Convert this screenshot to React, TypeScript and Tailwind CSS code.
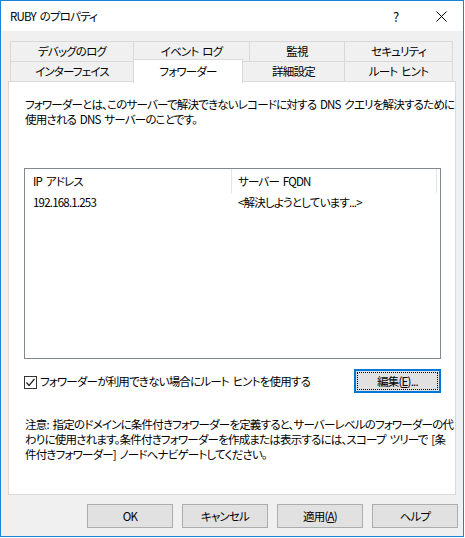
import type { ReactNode } from "react"

const font = { fontFamily: '"Noto Sans CJK JP", "Noto Sans", sans-serif' }

interface TabProps {
  label: string
  w: string
  first?: boolean
  active?: boolean
}

const Tab = ({ label, w, first, active }: TabProps) => {
  if (active) {
    return (
      <div className={`${w} -ml-px -mt-[2px] h-[24px] relative z-10 bg-white border border-b-0 border-[#d9d9d9] flex items-center justify-center`}>
        {label}
      </div>
    )
  }
  return (
    <div className={`${w} ${first ? "" : "-ml-px"} h-[21px] border border-[#d9d9d9] bg-[#f0f0f0] flex items-center justify-center`}>
      {label}
    </div>
  )
}

const Btn = ({ children }: { children: ReactNode }) => (
  <button className="w-[86px] h-[24px] border border-[#adadad] bg-[#e1e1e1] flex items-center justify-center">
    {children}
  </button>
)

export default function App() {
  return (
    <div className="w-[465px] h-[538px] bg-white text-[11.5px] tracking-[-0.8px] [word-spacing:2px] leading-[15px] text-black [font-feature-settings:'palt']" style={font}>
      <div className="w-[464px] h-[537px] border border-[#1883d7] bg-[#f0f0f0] flex flex-col">
        {/* title bar */}
        <div className="h-[30px] bg-white flex items-center pl-[9px]">
          <span className="flex-1">RUBY のプロパティ</span>
          <span className="w-[12px] text-center mr-[34px] text-[13px] tracking-normal">?</span>
          <svg width="11" height="11" viewBox="0 0 11 11" className="mr-[16px]">
            <path d="M0.5 0.5 L10.5 10.5 M10.5 0.5 L0.5 10.5" stroke="#000" strokeWidth="1" />
          </svg>
        </div>

        <div className="pt-[10px] px-[7px]">
          <div className="ml-[2px] flex h-[21px]">
            <Tab first w="w-[124px]" label="デバッグのログ" />
            <Tab w="w-[117px]" label="イベント ログ" />
            <Tab w="w-[96px]" label="監視" />
            <Tab w="w-[109px]" label="セキュリティ" />
          </div>
          <div className="ml-[2px] -mt-px flex items-start h-[21px]">
            <Tab first w="w-[124px]" label="インターフェイス" />
            <Tab active w="w-[110px]" label="フォワーダー" />
            <Tab w="w-[103px]" label="詳細設定" />
            <Tab w="w-[109px]" label="ルート ヒント" />
          </div>

          {/* panel */}
          <div className="-mt-px w-[448px] h-[414px] bg-white border border-[#d9d9d9] px-[15px] pt-[15px]">
            <div className="pl-[1px]">
              <div className="whitespace-nowrap">フォワーダーとは、このサーバーで解決できないレコードに対する DNS クエリを解決するために</div>
              <div className="whitespace-nowrap">使用される DNS サーバーのことです。</div>
            </div>

            <div className="mt-[41px] w-[417px] h-[191px] border border-[#828790] bg-white">
              <div className="flex h-[24px]">
                <div className="w-[207px] pl-[8px] flex items-center border-r border-[#e5e5e5]">IP アドレス</div>
                <div className="w-[205px] pl-[6px] flex items-center border-r border-[#e5e5e5]">サーバー FQDN</div>
              </div>
              <div className="flex h-[18px] items-center">
                <div className="w-[207px] pl-[8px]">192.168.1.253</div>
                <div className="pl-[6px]">&lt;解決しようとしています...&gt;</div>
              </div>
            </div>

            <div className="mt-[10px] w-[417px] h-[24px] flex items-center">
              <div className="w-[13px] h-[13px] mt-[2px] border border-[#333] bg-white flex items-center justify-center">
                <svg width="11" height="11" viewBox="0 0 11 11">
                  <path d="M1.5 5.5 L4 8.5 L9.5 2" fill="none" stroke="#222" strokeWidth="1.2" />
                </svg>
              </div>
              <span className="ml-[3px] flex-1 mt-[1px]">フォワーダーが利用できない場合にルート ヒントを使用する</span>
              <button className="w-[87px] h-[24px] border-2 border-[#0078d7] bg-[#e1e1e1] p-px">
                <span className="w-full h-full flex items-center justify-center border border-dotted border-black">
                  編集(<span className="underline">E</span>)...
                </span>
              </button>
            </div>

            <div className="mt-[24px] pl-[1px]">
              <div className="whitespace-nowrap">注意: 指定のドメインに条件付きフォワーダーを定義すると、サーバーレベルのフォワーダーの代</div>
              <div className="whitespace-nowrap">わりに使用されます。条件付きフォワーダーを作成または表示するには、スコープ ツリーで [条</div>
              <div className="whitespace-nowrap">件付きフォワーダー] ノードへナビゲートしてください。</div>
            </div>
          </div>
        </div>

        <div className="mt-[9px] flex gap-[9px] pl-[86px]">
          <Btn>OK</Btn>
          <Btn>キャンセル</Btn>
          <Btn>
            適用(<span className="underline">A</span>)
          </Btn>
          <Btn>ヘルプ</Btn>
        </div>
      </div>
    </div>
  )
}
